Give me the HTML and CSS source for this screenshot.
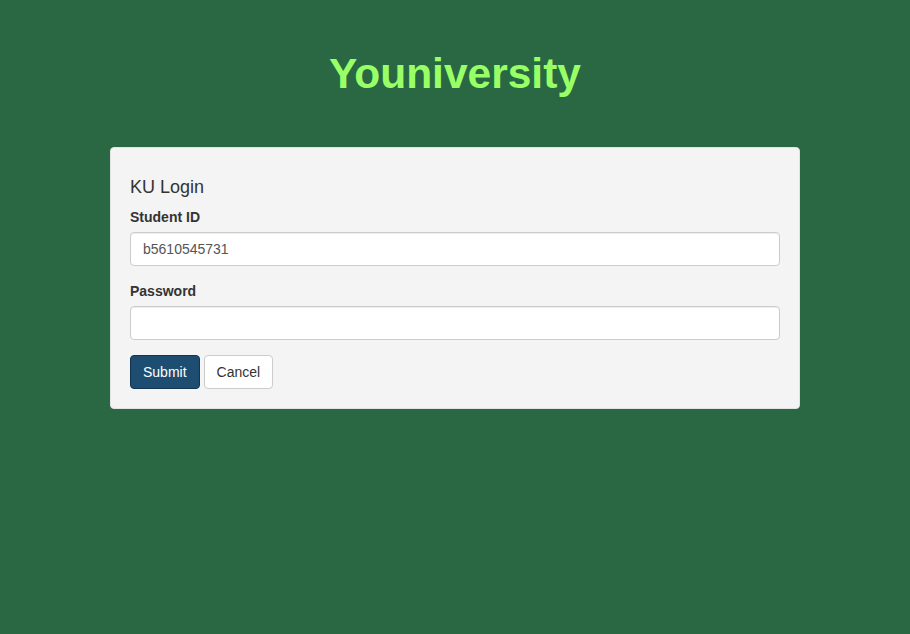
FILE: index.html
```html
<!DOCTYPE html>
<html lang="en">
<head>
<meta charset="utf-8">
<title>Youniversity</title>
<link rel="stylesheet" href="styles.css">
</head>
<body>
<header class="brand">
  <h1 class="brand-title">Youniversity</h1>
</header>
<main class="well">
  <h4 class="well-title">KU Login</h4>
  <form class="login-form">
    <div class="form-group">
      <label class="form-label" for="sid">Student ID</label>
      <input class="form-control" id="sid" type="text" value="b5610545731">
    </div>
    <div class="form-group">
      <label class="form-label" for="pwd">Password</label>
      <input class="form-control" id="pwd" type="password">
    </div>
    <div class="actions">
      <button class="btn btn-primary" type="submit">Submit</button>
      <button class="btn btn-default" type="button">Cancel</button>
    </div>
  </form>
</main>
</body>
</html>
```
FILE: styles.css
```css
* { box-sizing: border-box; }
html, body { margin: 0; padding: 0; }
body {
  background: #2a6844;
  font-family: "Liberation Sans", Arial, sans-serif;
  font-size: 14px;
  line-height: 1.42857;
  color: #333;
  min-height: 634px;
}
.brand {
  padding-top: 51px;
  padding-bottom: 50px;
  text-align: center;
}
.brand-title {
  margin: 0;
  font-size: 42.5px;
  line-height: 46px;
  font-weight: bold;
  color: #99ff66;
}
.well {
  display: block;
  width: 690px;
  margin: 0 auto;
  background: #f4f4f4;
  border: 1px solid #e3e3e3;
  border-radius: 4px;
  padding: 19px;
}
.well-title {
  margin: 11px 0 9px;
  font-size: 18px;
  font-weight: 500;
  line-height: 1.1;
  color: #333;
}
.form-group { margin-bottom: 15px; }
.form-label {
  display: block;
  font-weight: bold;
  margin-bottom: 5px;
  line-height: 20px;
}
.form-control {
  display: block;
  width: 100%;
  height: 34px;
  padding: 6px 12px;
  font-family: inherit;
  font-size: 14px;
  color: #555;
  background: #fff;
  border: 1px solid #ccc;
  border-radius: 4px;
  box-shadow: inset 0 1px 1px rgba(0,0,0,.075);
}
.actions {
  display: flex;
  gap: 4px;
}
.btn {
  height: 34px;
  padding: 6px 12px;
  font-family: inherit;
  font-size: 14px;
  line-height: 20px;
  border: 1px solid transparent;
  border-radius: 4px;
  cursor: pointer;
}
.btn-primary {
  background: #1e4d72;
  border-color: #133450;
  color: #fff;
}
.btn-default {
  background: #fff;
  border-color: #ccc;
  color: #333;
}
```
